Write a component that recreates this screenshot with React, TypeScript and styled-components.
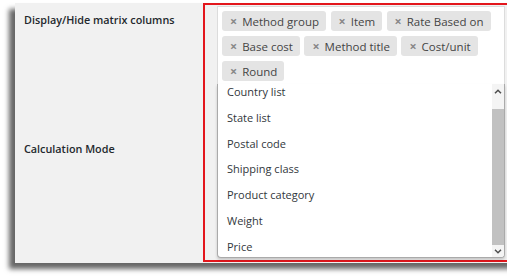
import React from "react";
import styled, { createGlobalStyle } from "styled-components";

const Global = createGlobalStyle`
  html, body { margin: 0; padding: 0; background: #ffffff; overflow: hidden; }
  body { width: 507px; height: 279px; font-family: "Open Sans", "Noto Sans", sans-serif; }
`;

const Panel = styled.div`
  display: flex;
  margin: 3px 0 0 15px;
  width: 540px;
  height: 260px;
  background: #f1f1f1;
  box-shadow: -6px 6px 5px rgba(0, 0, 0, 0.6);
`;

const LabelCol = styled.div`
  width: 188px;
  flex: none;
  display: flex;
  flex-direction: column;
  gap: 111px;
  padding: 8px 0 0 9px;
  box-sizing: border-box;
`;

const Label = styled.div`
  font-size: 10.8px;
  line-height: 18px;
  font-weight: 600;
  color: #23282d;
`;

const FieldCell = styled.div`
  flex: none;
  width: 330px;
  height: 259px;
  box-sizing: border-box;
  border: 2px solid #e3161c;
  padding: 1px 0 0 12px;
`;

const Select = styled.div`
  width: 288px;
  display: flex;
  flex-direction: column;
`;

const Tags = styled.div`
  display: flex;
  flex-wrap: wrap;
  gap: 5px 4.5px;
  padding: 4px 4px 3px 4px;
  background: #ffffff;
  border: 1px solid #dcdcdc;
  border-bottom: none;
`;

const Tag = styled.div`
  display: flex;
  align-items: center;
  height: 20px;
  padding: 0 7px 0 8px;
  background: #e4e4e4;
  border-radius: 3px;
  font-size: 11.5px;
  color: #444;
  white-space: nowrap;
`;

const Remove = styled.span`
  color: #888;
  font-weight: 700;
  font-size: 12.5px;
  margin-right: 5px;
`;

const List = styled.div`
  display: flex;
  height: 173px;
  background: #ffffff;
  border: 1px solid #aaaaaa;
  border-top: none;
  border-radius: 0 0 4px 4px;
  box-shadow: 0 2px 3px rgba(0, 0, 0, 0.18);
  overflow: hidden;
`;

const Options = styled.div`
  flex: 1;
  overflow: hidden;
`;

const OptionsInner = styled.div`
  margin-top: -4.9px;
`;

const Option = styled.div`
  height: 25.75px;
  line-height: 25.75px;
  padding-left: 9px;
  font-size: 11px;
  color: #32373c;
  white-space: nowrap;
`;

const Scrollbar = styled.div`
  width: 12px;
  flex: none;
  display: flex;
  flex-direction: column;
  background: #f4f4f4;
`;

const ScrollButton = styled.div<{ $h: number }>`
  height: ${(p) => p.$h}px;
  display: flex;
  align-items: center;
  justify-content: center;
  flex: none;
`;

const Track = styled.div`
  flex: 1;
  display: flex;
  flex-direction: column;
  padding-top: 11px;
`;

const Thumb = styled.div`
  flex: 1;
  background: #c1c1c1;
`;

const Chevron = ({ up }: { up?: boolean }) => (
  <svg width="8" height="5" viewBox="0 0 8 5">
    <polyline
      points={up ? "1,4.2 4,1.2 7,4.2" : "1,0.8 4,3.8 7,0.8"}
      fill="none"
      stroke="#505050"
      strokeWidth="1.5"
    />
  </svg>
);

const tags = [
  "Method group",
  "Item",
  "Rate Based on",
  "Base cost",
  "Method title",
  "Cost/unit",
  "Round",
];

const options = [
  "Country list",
  "State list",
  "Postal code",
  "Shipping class",
  "Product category",
  "Weight",
  "Price",
];

export default function App() {
  return (
    <>
      <Global />
      <Panel>
        <LabelCol>
          <Label>Display/Hide matrix columns</Label>
          <Label>Calculation Mode</Label>
        </LabelCol>
        <FieldCell>
          <Select>
            <Tags>
              {tags.map((t) => (
                <Tag key={t}>
                  <Remove>×</Remove>
                  {t}
                </Tag>
              ))}
            </Tags>
            <List>
              <Options>
                <OptionsInner>
                  {options.map((o) => (
                    <Option key={o}>{o}</Option>
                  ))}
                </OptionsInner>
              </Options>
              <Scrollbar>
                <ScrollButton $h={14}>
                  <Chevron up />
                </ScrollButton>
                <Track>
                  <Thumb />
                </Track>
                <ScrollButton $h={12}>
                  <Chevron />
                </ScrollButton>
              </Scrollbar>
            </List>
          </Select>
        </FieldCell>
      </Panel>
    </>
  );
}
